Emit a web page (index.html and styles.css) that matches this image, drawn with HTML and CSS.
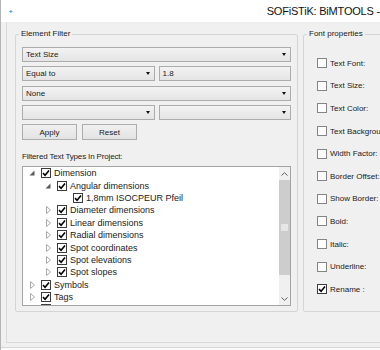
FILE: index.html
```html
<!DOCTYPE html>
<html lang="en">
<head>
    <meta charset="UTF-8">
    <meta name="viewport" content="width=device-width, initial-scale=1.0">
    <title>SOFiSTiK: BiMTOOLS</title>
    <link rel="stylesheet" href="styles.css">
</head>
<body>
    <div class="window">
        <div class="titlebar">
            <svg class="app-icon" width="12" height="9" viewBox="0 0 12 9">
                <polygon points="0,4.5 6.5,0.5 12,3.5 5.5,8.5" fill="#2b8ee2"/>
                <path d="M2.5 4.6 7.2 1.8 M4 5.6 8.7 2.8 M5.5 6.6 10.2 3.8" stroke="#9fd2f7" stroke-width="0.8"/>
            </svg>
            <span class="title">SOFiSTiK: BiMTOOLS -</span>
        </div>

        <div class="panel">
            <fieldset class="group filter">
                <legend>Element Filter</legend>
                <div class="group-body">
                    <div class="rows">
                        <div class="combo"><span>Text Size</span><i class="arrow"></i></div>
                        <div class="pair">
                            <div class="combo"><span>Equal to</span><i class="arrow"></i></div>
                            <div class="combo"><span>1.8</span></div>
                        </div>
                        <div class="combo"><span>None</span><i class="arrow"></i></div>
                        <div class="pair">
                            <div class="combo"><span></span><i class="arrow"></i></div>
                            <div class="combo"><span></span><i class="arrow"></i></div>
                        </div>
                        <div class="buttons">
                            <button>Apply</button>
                            <button>Reset</button>
                        </div>
                    </div>

                    <div class="label">Filtered Text Types In Project:</div>

                    <div class="tree">
                        <div class="tree-items">
                            <div class="node lvl0"><span class="exp"><svg width="6" height="6" viewBox="0 0 6 6"><polygon points="5.5,0.5 5.5,5.5 0.5,5.5" fill="#5a5a5a"/></svg></span><span class="check on"><svg width="8" height="8" viewBox="0 0 8 8"><path d="M1 4.1 3.1 6.2 7 1.6" fill="none" stroke="#000" stroke-width="1.6"/></svg></span>Dimension</div>
                            <div class="node lvl1"><span class="exp"><svg width="6" height="6" viewBox="0 0 6 6"><polygon points="5.5,0.5 5.5,5.5 0.5,5.5" fill="#5a5a5a"/></svg></span><span class="check on"><svg width="8" height="8" viewBox="0 0 8 8"><path d="M1 4.1 3.1 6.2 7 1.6" fill="none" stroke="#000" stroke-width="1.6"/></svg></span>Angular dimensions</div>
                            <div class="node lvl2"><span class="exp"></span><span class="check on"><svg width="8" height="8" viewBox="0 0 8 8"><path d="M1 4.1 3.1 6.2 7 1.6" fill="none" stroke="#000" stroke-width="1.6"/></svg></span>1,8mm ISOCPEUR Pfeil</div>
                            <div class="node lvl1"><span class="exp"><svg width="5" height="8" viewBox="0 0 5 8"><polygon points="0.5,0.5 4.5,4 0.5,7.5" fill="none" stroke="#a8a8a8"/></svg></span><span class="check on"><svg width="8" height="8" viewBox="0 0 8 8"><path d="M1 4.1 3.1 6.2 7 1.6" fill="none" stroke="#000" stroke-width="1.6"/></svg></span>Diameter dimensions</div>
                            <div class="node lvl1"><span class="exp"><svg width="5" height="8" viewBox="0 0 5 8"><polygon points="0.5,0.5 4.5,4 0.5,7.5" fill="none" stroke="#a8a8a8"/></svg></span><span class="check on"><svg width="8" height="8" viewBox="0 0 8 8"><path d="M1 4.1 3.1 6.2 7 1.6" fill="none" stroke="#000" stroke-width="1.6"/></svg></span>Linear dimensions</div>
                            <div class="node lvl1"><span class="exp"><svg width="5" height="8" viewBox="0 0 5 8"><polygon points="0.5,0.5 4.5,4 0.5,7.5" fill="none" stroke="#a8a8a8"/></svg></span><span class="check on"><svg width="8" height="8" viewBox="0 0 8 8"><path d="M1 4.1 3.1 6.2 7 1.6" fill="none" stroke="#000" stroke-width="1.6"/></svg></span>Radial dimensions</div>
                            <div class="node lvl1"><span class="exp"><svg width="5" height="8" viewBox="0 0 5 8"><polygon points="0.5,0.5 4.5,4 0.5,7.5" fill="none" stroke="#a8a8a8"/></svg></span><span class="check on"><svg width="8" height="8" viewBox="0 0 8 8"><path d="M1 4.1 3.1 6.2 7 1.6" fill="none" stroke="#000" stroke-width="1.6"/></svg></span>Spot coordinates</div>
                            <div class="node lvl1"><span class="exp"><svg width="5" height="8" viewBox="0 0 5 8"><polygon points="0.5,0.5 4.5,4 0.5,7.5" fill="none" stroke="#a8a8a8"/></svg></span><span class="check on"><svg width="8" height="8" viewBox="0 0 8 8"><path d="M1 4.1 3.1 6.2 7 1.6" fill="none" stroke="#000" stroke-width="1.6"/></svg></span>Spot elevations</div>
                            <div class="node lvl1"><span class="exp"><svg width="5" height="8" viewBox="0 0 5 8"><polygon points="0.5,0.5 4.5,4 0.5,7.5" fill="none" stroke="#a8a8a8"/></svg></span><span class="check on"><svg width="8" height="8" viewBox="0 0 8 8"><path d="M1 4.1 3.1 6.2 7 1.6" fill="none" stroke="#000" stroke-width="1.6"/></svg></span>Spot slopes</div>
                            <div class="node lvl0"><span class="exp"><svg width="5" height="8" viewBox="0 0 5 8"><polygon points="0.5,0.5 4.5,4 0.5,7.5" fill="none" stroke="#a8a8a8"/></svg></span><span class="check on"><svg width="8" height="8" viewBox="0 0 8 8"><path d="M1 4.1 3.1 6.2 7 1.6" fill="none" stroke="#000" stroke-width="1.6"/></svg></span>Symbols</div>
                            <div class="node lvl0"><span class="exp"><svg width="5" height="8" viewBox="0 0 5 8"><polygon points="0.5,0.5 4.5,4 0.5,7.5" fill="none" stroke="#a8a8a8"/></svg></span><span class="check on"><svg width="8" height="8" viewBox="0 0 8 8"><path d="M1 4.1 3.1 6.2 7 1.6" fill="none" stroke="#000" stroke-width="1.6"/></svg></span>Tags</div>
                            <div class="node lvl0"><span class="exp"></span><span class="check on"></span></div>
                        </div>
                        <div class="scrollbar">
                            <div class="sb-btn"><svg width="7" height="4" viewBox="0 0 7 4"><path d="M0.5 3.5 3.5 0.7 6.5 3.5" fill="none" stroke="#606060"/></svg></div>
                            <div class="sb-thumb"><span class="grip"></span></div>
                            <div class="sb-track"></div>
                            <div class="sb-btn"><svg width="7" height="4" viewBox="0 0 7 4"><path d="M0.5 0.5 3.5 3.3 6.5 0.5" fill="none" stroke="#606060"/></svg></div>
                        </div>
                    </div>
                </div>
            </fieldset>

            <fieldset class="group props">
                <legend>Font properties</legend>
                <div class="group-body">
                    <div class="prop"><span class="check"></span>Text Font:</div>
                    <div class="prop"><span class="check"></span>Text Size:</div>
                    <div class="prop"><span class="check"></span>Text Color:</div>
                    <div class="prop"><span class="check"></span>Text Background:</div>
                    <div class="prop"><span class="check"></span>Width Factor:</div>
                    <div class="prop"><span class="check"></span>Border Offset:</div>
                    <div class="prop"><span class="check"></span>Show Border:</div>
                    <div class="prop"><span class="check"></span>Bold:</div>
                    <div class="prop"><span class="check"></span>Italic:</div>
                    <div class="prop"><span class="check"></span>Underline:</div>
                    <div class="prop"><span class="check on"><svg width="8" height="8" viewBox="0 0 8 8"><path d="M1 4.1 3.1 6.2 7 1.6" fill="none" stroke="#000" stroke-width="1.6"/></svg></span>Rename :</div>
                </div>
            </fieldset>
        </div>

        <div class="statusbar"></div>
    </div>
</body>
</html>
```

FILE: styles.css
```css
* {
    box-sizing: border-box;
}

body {
    margin: 0;
    width: 380px;
    height: 350px;
    overflow: hidden;
    background-color: #f0f0f0;
    font-family: "Liberation Sans", Arial, sans-serif;
    font-size: 8px;
    color: #1a1a1a;
}

.window {
    display: flex;
    flex-direction: column;
    height: 350px;
    border-left: 1px solid #b4b4b4;
}

.titlebar {
    flex: none;
    display: flex;
    align-items: center;
    height: 22px;
    padding-left: 8px;
    background-color: #fff;
    white-space: nowrap;
}

.titlebar .title {
    margin-left: 254px;
    font-size: 11px;
    letter-spacing: -0.2px;
    color: #111;
}

.panel {
    flex: none;
    display: flex;
    gap: 5px;
    height: 321px;
    margin-left: 5px;
    padding: 7px 0 0 8px;
    border-left: 1px solid #d9d9d9;
    border-bottom: 1px solid #d9d9d9;
    overflow: hidden;
}

.group {
    flex: none;
    margin: 0;
    padding: 0;
    border: 1px solid #d5d5d5;
    border-radius: 2px;
    min-width: 0;
}

.group legend {
    margin-left: 3px;
    padding: 0 2px;
    line-height: 10px;
}

.filter {
    width: 283px;
    align-self: flex-start;
}

.filter .group-body {
    padding: 8px 6px 5px 6px;
}

.props {
    width: 130px;
    height: 283px;
}

.props .group-body {
    padding: 13px 0 0 13px;
}

/* element filter */
.rows {
    display: flex;
    flex-direction: column;
    gap: 4.33px;
}

.pair {
    display: grid;
    grid-template-columns: 1fr 1fr;
    gap: 4px;
}

.combo {
    display: flex;
    align-items: center;
    height: 15px;
    padding: 0 4px 0 3px;
    background: linear-gradient(#f3f3f3, #e4e4e4);
    border: 1px solid #acacac;
}

.combo span {
    flex: 1;
}

.combo .arrow {
    width: 0;
    height: 0;
    border-left: 2.5px solid transparent;
    border-right: 2.5px solid transparent;
    border-top: 3px solid #111;
}

.buttons {
    display: flex;
    gap: 5px;
}

.buttons button {
    width: 55px;
    height: 16px;
    padding: 0;
    font-family: inherit;
    font-size: 8px;
    color: #1a1a1a;
    background: linear-gradient(#f0f0f0, #e3e3e3);
    border: 1px solid #adadad;
}

.label {
    margin-top: 12px;
    line-height: 10px;
    letter-spacing: -0.15px;
}

/* tree */
.tree {
    display: flex;
    height: 140px;
    margin-top: 3.7px;
    background-color: #fff;
    border: 1px solid #a3a3a3;
}

.tree-items {
    flex: 1;
    overflow: hidden;
    font-size: 9px;
    color: #222;
}

.node {
    display: flex;
    align-items: center;
    height: 12.4px;
    white-space: nowrap;
}

.lvl0 { padding-left: 1px; }
.lvl1 { padding-left: 17px; }
.lvl2 { padding-left: 33px; }

.exp {
    flex: none;
    display: flex;
    align-items: center;
    justify-content: center;
    width: 16px;
}

.check {
    flex: none;
    display: flex;
    align-items: center;
    justify-content: center;
    width: 10px;
    height: 10px;
    margin: 0 3px 0 1px;
    background-color: #fdfdfd;
    border: 1px solid #858585;
}

.check.on {
    border-color: #3c3c3c;
}

.scrollbar {
    flex: none;
    display: flex;
    flex-direction: column;
    width: 11px;
    background-color: #f0f0f0;
}

.sb-btn {
    flex: none;
    display: flex;
    align-items: center;
    justify-content: center;
    height: 13px;
}

.sb-thumb {
    flex: none;
    display: flex;
    align-items: center;
    justify-content: center;
    height: 95px;
    background-color: #cdcdcd;
}

.sb-thumb .grip {
    width: 7px;
    height: 7px;
    background-color: #e6e6e6;
}

.sb-track {
    flex: 1;
}

/* font properties */
.prop {
    display: flex;
    align-items: center;
    height: 22.6px;
    white-space: nowrap;
}

.prop .check {
    margin: 0 3px 0 0;
}

.statusbar {
    flex: 1;
    margin-top: 4px;
    background-color: #fbfbfb;
    border-top: 1px solid #d6d6d6;
}
```
